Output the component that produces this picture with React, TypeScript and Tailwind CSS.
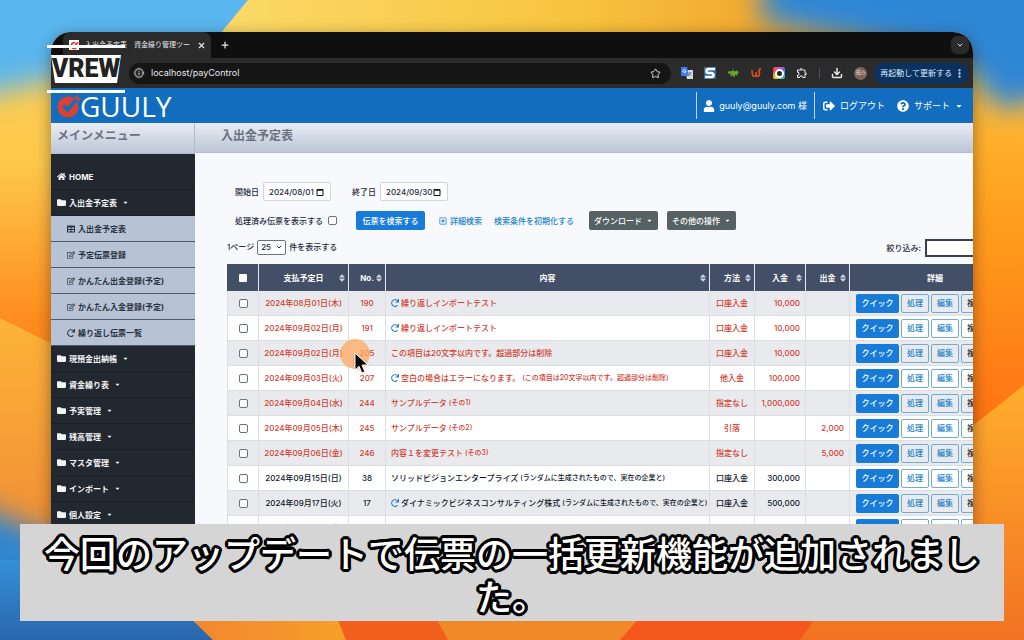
import { ReactNode } from 'react';

import clsx from 'clsx';
import {
  FaCaretDown,
  FaFolder,
  FaHome,
  FaQuestionCircle,
  FaRedo,
  FaRegEdit,
  FaRegPlusSquare,
  FaSignOutAlt,
  FaSort,
  FaTable,
  FaUser,
} from 'react-icons/fa';
import { MdOutlineExtension } from 'react-icons/md';
import {
  ArrowLeft,
  ArrowRight,
  ChevronDown,
  Download,
  EllipsisVertical,
  Info,
  Plus,
  RotateCw,
  Star,
  X,
} from 'lucide-react';

type Entry = {
  date: string;
  no: string;
  title: string;
  note?: string;
  repeat?: boolean;
  method: string;
  income?: string;
  expense?: string;
  done?: boolean;
};

const entries: Entry[] = [
  { date: '2024年08月01日(木)', no: '190', title: '繰り返しインポートテスト', repeat: true, method: '口座入金', income: '10,000' },
  { date: '2024年09月02日(月)', no: '191', title: '繰り返しインポートテスト', repeat: true, method: '口座入金', income: '10,000' },
  { date: '2024年09月02日(月)', no: '205', title: 'この項目は20文字以内です。超過部分は削除', method: '口座入金', income: '10,000' },
  { date: '2024年09月03日(火)', no: '207', title: '空白の場合はエラーになります。', note: '(この項目は20文字以内です。超過部分は削除)', repeat: true, method: '他入金', income: '100,000' },
  { date: '2024年09月04日(水)', no: '244', title: 'サンプルデータ', note: '(その1)', method: '指定なし', income: '1,000,000' },
  { date: '2024年09月05日(木)', no: '245', title: 'サンプルデータ', note: '(その2)', method: '引落', expense: '2,000' },
  { date: '2024年09月06日(金)', no: '246', title: '内容１を変更テスト', note: '(その3)', method: '指定なし', expense: '5,000' },
  { date: '2024年09月15日(日)', no: '38', title: 'ソリッドビジョンエンタープライズ', note: '(ランダムに生成されたもので、実在の企業と)', method: '口座入金', income: '300,000', done: true },
  { date: '2024年09月17日(火)', no: '17', title: 'ダイナミックビジネスコンサルティング株式', note: '(ランダムに生成されたもので、実在の企業と)', repeat: true, method: '口座入金', income: '500,000', done: true },
  { date: '2024年09月20日(金)', no: '18', title: '繰り返しサンプル', repeat: true, method: '口座入金', income: '200,000', done: true },
];

const subMenu = [
  { label: '入出金予定表', icon: FaTable },
  { label: '予定伝票登録', icon: FaRegEdit },
  { label: 'かんたん出金登録(予定)', icon: FaRegEdit },
  { label: 'かんたん入金登録(予定)', icon: FaRegEdit },
  { label: '繰り返し伝票一覧', icon: FaRedo },
];

const folders = ['現預金出納帳', '資金繰り表', '予実管理', '残高管理', 'マスタ管理', 'インポート', '個人設定'];

function Wallpaper() {
  return (
    <svg className="absolute inset-0 h-full w-full" viewBox="0 0 1024 640" preserveAspectRatio="none" aria-hidden="true">
      <defs>
        <filter id="soft" x="-30%" y="-30%" width="160%" height="160%">
          <feGaussianBlur stdDeviation="14" />
        </filter>
        <linearGradient id="base" x1="0" y1="0" x2="0" y2="1">
          <stop offset="0" stopColor="#fbd05a" />
          <stop offset="0.25" stopColor="#fdc94c" />
          <stop offset="0.5" stopColor="#ff8c1e" />
          <stop offset="1" stopColor="#f3701f" />
        </linearGradient>
        <linearGradient id="top" x1="0" y1="0" x2="1" y2="0">
          <stop offset="0" stopColor="#fbdb6a" />
          <stop offset="0.45" stopColor="#f8c43f" />
          <stop offset="0.7" stopColor="#f0a52d" />
          <stop offset="1" stopColor="#f0a52d" />
        </linearGradient>
        <linearGradient id="right" x1="0" y1="0" x2="0" y2="1">
          <stop offset="0" stopColor="#ffc23c" />
          <stop offset="0.4" stopColor="#ffa01e" />
          <stop offset="1" stopColor="#ff6f12" />
        </linearGradient>
        <linearGradient id="wedge" x1="0" y1="0" x2="0" y2="1">
          <stop offset="0" stopColor="#ffad2c" />
          <stop offset="1" stopColor="#f27222" />
        </linearGradient>
        <linearGradient id="left" x1="0" y1="0" x2="0" y2="1">
          <stop offset="0" stopColor="#fdb338" />
          <stop offset="1" stopColor="#f08a35" />
        </linearGradient>
        <linearGradient id="blue" x1="0" y1="0" x2="0" y2="1">
          <stop offset="0" stopColor="#3490d8" />
          <stop offset="1" stopColor="#2a66ad" />
        </linearGradient>
        <linearGradient id="floor" x1="0" y1="0" x2="1" y2="0">
          <stop offset="0" stopColor="#f07a35" />
          <stop offset="1" stopColor="#f6a028" />
        </linearGradient>
      </defs>
      <rect width="1024" height="640" fill="url(#base)" />
      <rect x="200" width="824" height="100" fill="url(#top)" />
      <path d="M-60-60H200V40L50 80-60 105Z" fill="#5ab6ee" filter="url(#soft)" />
      <path d="M0 0H248L205 52H0Z" fill="#5ab6ee" />
      <rect x="940" y="60" width="84" height="380" fill="url(#right)" />
      <path d="M770-60H1100V80L1000 110 960 60 760 20Z" fill="#2f86d6" filter="url(#soft)" />
      <path d="M0 318L60 348V560H0Z" fill="url(#left)" />
      <path d="M-60 490L60 540 210 700H-60Z" fill="#2f86cf" filter="url(#soft)" />
      <path d="M0 560H130L213 640H0Z" fill="url(#blue)" />
      <path d="M120 548L213 640H346L310 548Z" fill="url(#floor)" />
      <path d="M310 548L346 640H448L400 548Z" fill="#f2601d" />
      <path d="M400 548L448 640H650L700 548Z" fill="#f08a29" />
      <path d="M700 548L620 640H830L860 548Z" fill="#f4581c" />
      <path d="M930 460L1024 385V640H800Z" fill="url(#wedge)" />
    </svg>
  );
}

function BrowserChrome() {
  return (
    <div className="shrink-0 bg-[#0f0f0f] text-gray-200">
      <div className="flex h-[26px] items-center pr-1">
        <div className="ml-3 flex h-full w-[148px] items-center gap-1 rounded-t-lg bg-[#2b2b2b] px-1">
          <span className="ml-[2px] flex h-[10px] w-[10px] shrink-0 items-center justify-center bg-white">
            <svg viewBox="0 0 10 10" className="h-[9px] w-[9px]" fill="none" stroke="#d93a32" strokeWidth="2">
              <path d="M8 4.5A3.3 3.3 0 1 1 6 2M3.5 4.5 5 6 9 1.5" />
            </svg>
          </span>
          <span className="min-w-0 flex-1 overflow-hidden pl-[2px] text-[7px] whitespace-nowrap">入出金予定表　資金繰り管理ツー</span>
          <button type="button" aria-label="タブを閉じる" className="pr-px">
            <X className="h-[9px] w-[9px]" strokeWidth={3} />
          </button>
        </div>
        <button type="button" aria-label="新しいタブ" className="ml-[9px]">
          <Plus className="h-[10px] w-[10px]" strokeWidth={3} />
        </button>
        <button type="button" aria-label="タブを検索" className="ml-auto flex h-[18px] w-[18px] items-center justify-center rounded-md bg-[#2b2b2b]">
          <ChevronDown className="h-2 w-2" strokeWidth={3} />
        </button>
      </div>
      <div className="flex h-[30px] items-center bg-[#2b2b2b] pr-1">
        <div className="flex w-[78px] items-center gap-3 pl-2">
          <ArrowLeft className="h-3 w-3" />
          <ArrowRight className="h-3 w-3 text-gray-500" />
          <RotateCw className="h-3 w-3" />
        </div>
        <div className="flex h-[21px] min-w-0 flex-1 items-center rounded-full bg-[#151515] pr-[10px] pl-1">
          <span className="flex h-3 w-3 items-center justify-center rounded-full bg-[#2b2b2b]">
            <Info className="h-[10px] w-[10px]" />
          </span>
          <input
            type="text"
            aria-label="アドレス"
            defaultValue="localhost/payControl"
            className="ml-[6px] min-w-0 flex-1 bg-transparent text-[9px] text-gray-200 outline-none"
          />
          <Star className="h-[11px] w-[11px]" />
        </div>
        <div className="ml-[10px] flex items-center gap-[11px]">
          <svg viewBox="0 0 12 12" className="h-3 w-3">
            <path d="M4 3h8v9H6z" fill="#d8dbe0" />
            <path d="M0 0h6l2 9H0z" fill="#3f7de8" />
            <path d="M5 4.5H3.4M4.800 3.200A1.500 1.500 0 1 0 5 4.500" stroke="#fff" fill="none" strokeWidth=".8" />
            <path d="M7.5 6h3M9 5v1c0 1-.6 2-1.4 2.6M8.4 7l2 2" stroke="#59616e" fill="none" strokeWidth=".7" />
          </svg>
          <svg viewBox="0 0 12 12" className="h-3 w-3">
            <path d="M0 0h12v12H0z" fill="#2e6ca0" />
            <path d="M11 2H4.5a1.7 1.7 0 0 0 0 4h3a1.7 1.7 0 0 1 0 4H1" fill="none" stroke="#fff" strokeWidth="2.6" />
          </svg>
          <svg viewBox="0 0 12 12" className="h-3 w-3" fill="#66a52c">
            <path d="M1 4.500 3.500 4 5 4.500 6 2l1.500 2.500 2-1L12 5l-1.500 1.500L11 8.500l-3-.8L7.500 10.500 5.500 8.500 3 9.500 4 7 1 6.500z" />
          </svg>
          <svg viewBox="0 0 12 12" className="h-3 w-3" fill="none" stroke="#df4a1e" strokeWidth="1.7">
            <path d="M2 3c0 4 1 6.500 2.500 6.500S6 8 6 5c0 3 .5 4.500 1.800 4.500s2.500-3 1-5M10.500 1 8.500 5" />
          </svg>
          <span className="flex h-3 w-3 items-center justify-center rounded-[2px] bg-[conic-gradient(#e94ac8,#3b7bf0,#31c8a8,#f3d33b,#ee4b2b,#e94ac8)]">
            <span className="h-[9px] w-[9px] rounded-full border-2 border-white bg-[#222]" />
          </span>
          <MdOutlineExtension className="h-3 w-3" />
          <span className="h-[10px] w-px bg-gray-600" />
          <Download className="h-3 w-3" strokeWidth={3} />
          <span className="flex h-[13px] w-[13px] items-center justify-center rounded-full bg-[#806359] text-[5px]">眞介</span>
        </div>
        <button type="button" className="ml-[7px] flex h-[21px] items-center gap-[2px] rounded-full bg-[#0b325f] pr-1 pl-[6px] text-[8px] text-blue-100">
          再起動して更新する
          <EllipsisVertical className="h-[11px] w-[11px]" strokeWidth={3} />
        </button>
      </div>
    </div>
  );
}

function SiteHeader() {
  return (
    <header className="flex h-[35px] shrink-0 items-center bg-[#126dbe] text-[9px] text-white">
      <a href="#home" className="ml-[6px] flex items-center">
        <svg viewBox="0 0 24 24" className="h-6 w-6">
          <circle cx="11" cy="13" r="10.500" fill="#dc402f" />
          <path d="m6.500 11.500 4 4.500L19 6" fill="none" stroke="#126dbe" strokeWidth="3.600" />
          <path d="m18 5 3-3.500M20.500 6.500 23 4.500" stroke="#dc402f" strokeWidth="2.500" />
        </svg>
        <span className="-ml-px font-['Open_Sans',sans-serif] text-[28px] leading-[28px] font-medium">GUULY</span>
      </a>
      <div className="ml-auto flex h-[27px] items-center gap-1 border-x border-blue-200 pr-[7px] pl-[6px]">
        <FaUser className="h-3 w-3" />
        <span>guuly@guuly.com 様</span>
      </div>
      <button type="button" className="ml-2 flex items-center gap-[5px]">
        <FaSignOutAlt className="h-3 w-3" />
        ログアウト
      </button>
      <button type="button" className="mr-[10px] ml-3 flex items-center gap-[5px]">
        <FaQuestionCircle className="h-3 w-3" />
        サポート
        <FaCaretDown className="h-2 w-2" />
      </button>
    </header>
  );
}

function Sidebar() {
  return (
    <aside className="w-[144px] shrink-0 bg-[#22282f] text-[8px] font-bold text-gray-100">
      <h2 className="h-[31px] border-r border-b border-[#b3bccb] bg-linear-to-b from-[#e9edf4] to-[#bcc6d6] px-[6px] pt-[5px] text-[12px] leading-4 text-gray-500">
        メインメニュー
      </h2>
      <nav className="pt-[10px]">
        <a href="#home" className="flex h-[26px] items-center gap-[3px] border-b border-[#1a1f25] px-[6px]">
          <FaHome className="h-[9px] w-[9px]" />
          HOME
        </a>
        <FolderItem label="入出金予定表" />
        {subMenu.map(({ label, icon: Icon }) => (
          <a
            key={label}
            href="#menu"
            className="flex h-[26px] items-center gap-[3px] border-b border-[#4b5a70] bg-[#b7c2d4] px-4 text-[#28333f]"
          >
            <Icon className="h-2 w-2" />
            {label}
          </a>
        ))}
        {folders.map((label) => (
          <FolderItem key={label} label={label} />
        ))}
      </nav>
    </aside>
  );
}

function FolderItem({ label }: { label: string }) {
  return (
    <button type="button" className="flex h-[26px] w-full items-center gap-[3px] border-b border-[#1a1f25] px-[6px]">
      <FaFolder className="h-[9px] w-[9px]" />
      {label}
      <FaCaretDown className="ml-[2px] h-[7px] w-[7px]" />
    </button>
  );
}

function DateField({ id, label, value }: { id: string; label: string; value: string }) {
  return (
    <div className="flex items-center gap-1">
      <label htmlFor={id}>{label}</label>
      <div className="flex h-[19px] w-[68px] items-center rounded-[2px] border border-gray-300 bg-white pr-[6px] pl-[5px]">
        <input id={id} type="text" defaultValue={value} className="w-0 min-w-0 flex-1 bg-transparent outline-none" />
        <svg viewBox="0 0 8 8" className="h-2 w-2 shrink-0" fill="none" stroke="#111">
          <path d="M1 1.500h6v6H1z" />
          <path d="M1 2h6" strokeWidth="1.600" />
        </svg>
      </div>
    </div>
  );
}

function SearchForm() {
  return (
    <form className="pl-2">
      <div className="flex h-[19px] items-center gap-[21px]">
        <DateField id="from" label="開始日" value="2024/08/01" />
        <DateField id="to" label="終了日" value="2024/09/30" />
      </div>
      <div className="mt-[10px] flex h-[19px] items-center">
        <label className="flex w-[121px] items-center gap-[5px]">
          処理済み伝票を表示する
          <input type="checkbox" className="h-[9px] w-[9px] appearance-none rounded-[2px] border border-gray-500 bg-white" />
        </label>
        <button type="button" className="h-[19px] w-[69px] rounded-[2px] bg-[#187bd8] text-white">
          伝票を検索する
        </button>
        <a href="#detail" className="ml-[14px] flex items-center gap-[3px] text-[#2384c8]">
          <FaRegPlusSquare className="h-2 w-2" />
          詳細検索
        </a>
        <a href="#reset" className="ml-3 w-[82px] text-[#2384c8]">
          検索条件を初期化する
        </a>
        <MenuButton label="ダウンロード" className="ml-[13px]" />
        <MenuButton label="その他の操作" className="ml-[9px]" />
      </div>
    </form>
  );
}

function MenuButton({ label, className }: { label: string; className: string }) {
  return (
    <button
      type="button"
      className={clsx('flex h-[19px] w-[69px] items-center justify-center gap-1 rounded-[2px] bg-[#566164] text-white', className)}
    >
      {label}
      <FaCaretDown className="h-[7px] w-[7px]" />
    </button>
  );
}

function TableTools() {
  return (
    <div className="mt-2 flex h-[18px] items-center">
      <div className="flex items-center gap-[3px]">
        <label htmlFor="page-size">1ページ</label>
        <div className="flex h-[15px] w-[29px] items-center rounded-[2px] border border-gray-500 bg-white pr-[2px]">
          <select id="page-size" className="w-0 min-w-0 flex-1 appearance-none pl-[3px] outline-none" defaultValue="25">
            <option>25</option>
          </select>
          <ChevronDown className="h-2 w-2 shrink-0" strokeWidth={3} />
        </div>
        <span>件を表示する</span>
      </div>
      <label className="ml-auto flex items-center gap-1 pt-[2px]">
        絞り込み:
        <span className="w-[48px] overflow-hidden">
          <input type="search" className="block h-[18px] w-[100px] border-2 border-gray-700 bg-white" />
        </span>
      </label>
    </div>
  );
}

function HeadCell({ children, sortable = true }: { children: ReactNode; sortable?: boolean }) {
  return (
    <th className="border-r border-gray-200 px-[3px] font-bold">
      <div className={clsx('flex items-center', sortable && 'pl-[6px]')}>
        <span className="flex-1 text-center">{children}</span>
        {sortable && <FaSort className="h-[10px] w-[6px] text-slate-300" />}
      </div>
    </th>
  );
}

function EntryRow({ entry }: { entry: Entry }) {
  const cell = 'border-r border-b border-[#dcdee3]';
  const action = 'h-[19px] w-7 rounded-[2px] border';

  return (
    <tr className={clsx('h-[25px] odd:bg-[#e9eaee] even:bg-white', entry.done ? 'text-gray-900' : 'text-[#d2402f]')}>
      <td className={clsx(cell, 'border-l')}>
        <input
          type="checkbox"
          aria-label={entry.no}
          className="mx-auto block h-[9px] w-[9px] appearance-none rounded-[2px] border border-gray-500 bg-white"
        />
      </td>
      <td className={clsx(cell, 'text-center')}>{entry.date}</td>
      <td className={clsx(cell, 'text-center')}>{entry.no}</td>
      <td className={clsx(cell, 'pl-[5px]')}>
        <div className="flex items-center">
          {entry.repeat && <FaRedo className="mr-[2px] h-2 w-2 shrink-0 text-[#1c7ccc]" />}
          {entry.title}
          {entry.note && <span className="ml-[2px] text-[7px]">{entry.note}</span>}
        </div>
      </td>
      <td className={clsx(cell, 'text-center')}>{entry.method}</td>
      <td className={clsx(cell, 'pr-[5px] text-right')}>{entry.income}</td>
      <td className={clsx(cell, 'pr-[5px] text-right')}>{entry.expense}</td>
      <td className={cell}>
        <div className="flex gap-[2px] pl-[6px]">
          <button type="button" className="h-[19px] w-[43px] rounded-[2px] bg-[#187bd8] text-white">
            クイック
          </button>
          <button type="button" className={clsx(action, 'border-[#6fabd9] text-[#2384c8]')}>処理</button>
          <button type="button" className={clsx(action, 'border-[#6fabd9] text-[#2384c8]')}>編集</button>
          <button type="button" className={clsx(action, 'border-[#6fabd9] text-gray-900')}>複製</button>
        </div>
      </td>
    </tr>
  );
}

function PayTable() {
  return (
    <table className="w-full min-w-[794px] table-fixed border-separate border-spacing-0 whitespace-nowrap">
      <colgroup>
        <col className="w-[32px]" />
        <col className="w-[90px]" />
        <col className="w-[37px]" />
        <col />
        <col className="w-[45px]" />
        <col className="w-[51px]" />
        <col className="w-[44px]" />
        <col className="w-[171px]" />
      </colgroup>
      <thead>
        <tr className="h-[27px] bg-[#434f66] text-white">
          <HeadCell sortable={false}>
            <input type="checkbox" aria-label="すべて選択" className="mx-auto block h-2 w-2 appearance-none rounded-[1px] bg-white" />
          </HeadCell>
          <HeadCell>支払予定日</HeadCell>
          <HeadCell>No.</HeadCell>
          <HeadCell>内容</HeadCell>
          <HeadCell>方法</HeadCell>
          <HeadCell>入金</HeadCell>
          <HeadCell>出金</HeadCell>
          <HeadCell sortable={false}>詳細</HeadCell>
        </tr>
      </thead>
      <tbody>
        {entries.map((entry) => (
          <EntryRow key={entry.no} entry={entry} />
        ))}
      </tbody>
    </table>
  );
}

function Pointer() {
  return (
    <div className="pointer-events-none absolute top-[339px] left-[340px] h-[30px] w-[30px] rounded-full bg-[#ffa862]/75">
      <svg viewBox="0 0 16 24" className="absolute top-[13px] left-[14px] h-6 w-4 drop-shadow">
        <path d="M1 1v17l4-3.800 2.800 6.800 3-1.300L8 13h6z" fill="#000" stroke="#fff" />
      </svg>
    </div>
  );
}

function Watermark() {
  return (
    <div className="absolute top-[45px] left-[47px] flex h-[48px] w-[78px] items-center justify-center border-y-3 border-white">
      <svg viewBox="0 0 72 30" className="absolute h-[30px] w-[72px]">
        <path d="M1 1h70l-4 28H5z" fill="#fff" />
      </svg>
      <span className="relative font-['Roboto',sans-serif] text-[25px] leading-[28px] font-black text-[#222]">VREW</span>
    </div>
  );
}

export default function App() {
  return (
    <div className="relative flex h-screen flex-col overflow-hidden font-['Inter','Noto_Sans_CJK_JP',sans-serif]">
      <Wallpaper />
      <div className="relative mx-[51px] mt-8 mb-16 flex min-h-0 flex-1 flex-col overflow-hidden rounded-t-[20px] bg-[#f8f9fd] shadow-[0_4px_16px_rgba(0,0,0,0.4)]">
        <BrowserChrome />
        <SiteHeader />
        <div className="flex min-h-0 flex-1 overflow-hidden">
          <Sidebar />
          <main className="min-w-0 flex-1 overflow-hidden text-[8px] font-medium text-gray-800">
            <h1 className="h-[30px] border-b border-[#b3bccb] bg-linear-to-b from-[#e9edf4] to-[#bcc6d6] px-[26px] pt-[5px] text-[12px] leading-4 font-bold text-gray-500">
              入出金予定表
            </h1>
            <div className="pt-[29px] pl-8">
              <SearchForm />
              <TableTools />
              <div className="mt-2">
                <PayTable />
              </div>
            </div>
          </main>
        </div>
      </div>
      <Pointer />
      <Watermark />
      <div className="absolute inset-x-5 bottom-[19px] bg-[#d5d5d5] px-5 pt-[10px] pb-px text-center text-[36px] leading-[43px] font-medium text-white [text-shadow:3px_0_#000,-3px_0_#000,0_3px_#000,0_-3px_#000,2px_2px_#000,-2px_2px_#000,2px_-2px_#000,-2px_-2px_#000,3px_1px_#000,3px_-1px_#000,-3px_1px_#000,-3px_-1px_#000,1px_3px_#000,-1px_3px_#000,1px_-3px_#000,-1px_-3px_#000,1px_1px_#000,-1px_-1px_#000]">
        今回のアップデートで伝票の一括更新機能が追加されました。
      </div>
    </div>
  );
}
